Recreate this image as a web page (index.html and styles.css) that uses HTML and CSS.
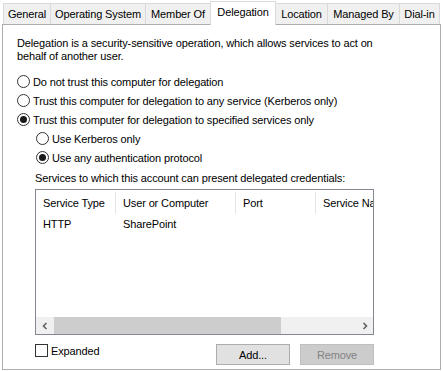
FILE: index.html
```html
<!DOCTYPE html>
<html>
<head>
<meta charset="utf-8">
<link rel="stylesheet" href="styles.css">
</head>
<body>
<div class="dialog">
  <div class="tabs">
    <div class="tab t1">General</div>
    <div class="tab t2">Operating System</div>
    <div class="tab t3">Member Of</div>
    <div class="tab t4 active">Delegation</div>
    <div class="tab t5">Location</div>
    <div class="tab t6">Managed By</div>
    <div class="tab t7">Dial-in</div>
  </div>
  <div class="panel">
    <p class="intro">Delegation is a security-sensitive operation, which allows services to act on behalf of another user.</p>
    <div class="options">
      <div class="radio-row"><span class="radio"></span><span>Do not trust this computer for delegation</span></div>
      <div class="radio-row"><span class="radio"></span><span>Trust this computer for delegation to any service (Kerberos only)</span></div>
      <div class="radio-row"><span class="radio checked"></span><span>Trust this computer for delegation to specified services only</span></div>
      <div class="sub">
        <div class="radio-row"><span class="radio"></span><span>Use Kerberos only</span></div>
        <div class="radio-row"><span class="radio checked"></span><span>Use any authentication protocol</span></div>
      </div>
    </div>
    <div class="services">
      <div class="label">Services to which this account can present delegated credentials:</div>
      <div class="listview">
        <div class="list-body">
          <div class="header">
            <div class="col c1">Service Type</div>
            <div class="col c2">User or Computer</div>
            <div class="col c3">Port</div>
            <div class="col c4">Service Na</div>
          </div>
          <div class="row">
            <div class="col c1">HTTP</div>
            <div class="col c2">SharePoint</div>
            <div class="col c3"></div>
            <div class="col c4"></div>
          </div>
        </div>
        <div class="hscroll">
          <div class="arrow"><svg width="8" height="8" viewBox="0 0 8 8"><path d="M5.5 1 L2.5 4 L5.5 7" fill="none" stroke="#606060" stroke-width="1.6"/></svg></div>
          <div class="track"><div class="thumb"></div></div>
          <div class="arrow"><svg width="8" height="8" viewBox="0 0 8 8"><path d="M2.5 1 L5.5 4 L2.5 7" fill="none" stroke="#606060" stroke-width="1.6"/></svg></div>
        </div>
      </div>
      <div class="footer">
        <label class="check"><span class="box"></span><span>Expanded</span></label>
        <div class="buttons">
          <button class="btn">Add...</button>
          <button class="btn disabled">Remove</button>
        </div>
      </div>
    </div>
  </div>
</div>
</body>
</html>
```

FILE: styles.css
```css
html, body {
  margin: 0;
  padding: 0;
  background: #ffffff;
}
body {
  font-family: "Liberation Sans", Arial, sans-serif;
  font-size: 11px;
  letter-spacing: -0.13px;
  color: #000;
  width: 443px;
  height: 371px;
  overflow: hidden;
}
.dialog {
  padding: 3px 0 0 2px;
}
.tabs {
  display: flex;
  height: 21px;
  padding-left: 1px;
  position: relative;
  z-index: 2;
}
.tab {
  box-sizing: border-box;
  height: 21px;
  border: 1px solid #d9d9d9;
  border-right: none;
  border-bottom: none;
  background: #f0f0f0;
  display: flex;
  align-items: center;
  justify-content: center;
  white-space: nowrap;
}
.tab.t1 { width: 47px; }
.tab.t2 { width: 95px; }
.tab.t3 { width: 65px; }
.tab.t4 { width: 66px; }
.tab.t5 { width: 51px; }
.tab.t6 { width: 72px; }
.tab.t7 { width: 41px; border-right: 1px solid #d9d9d9; }
.tab.active {
  background: #fff;
  height: 24px;
  margin-top: -2px;
  border: 1px solid #d9d9d9;
  border-bottom: none;
  padding-bottom: 3px;
}
.tab.active + .tab { border-left: none; }
.panel {
  box-sizing: border-box;
  width: 439px;
  height: 346px;
  border: 1px solid #adadad;
  background: #fff;
  padding: 12px 0 0 14px;
}
.intro {
  margin: 0;
  line-height: 13px;
  width: 362px;
}
.options {
  margin-top: 9px;
}
.radio-row {
  display: flex;
  align-items: center;
  height: 19px;
  gap: 3px;
  white-space: nowrap;
}
.radio {
  box-sizing: border-box;
  width: 13px;
  height: 13px;
  border: 1px solid #333;
  border-radius: 50%;
  background: #fff;
  display: flex;
  align-items: center;
  justify-content: center;
  flex: none;
}
.radio.checked::after {
  content: "";
  width: 7px;
  height: 7px;
  border-radius: 50%;
  background: #1a1a1a;
}
.sub {
  padding-left: 19px;
}
.services {
  padding-left: 18px;
}
.label {
  margin-top: 5px;
  line-height: 13px;
}
.listview {
  box-sizing: border-box;
  margin-top: 4px;
  width: 339px;
  height: 146px;
  border: 1px solid #828790;
  display: flex;
  flex-direction: column;
}
.list-body {
  flex: 1;
  overflow: hidden;
}
.header, .row {
  display: flex;
  white-space: nowrap;
}
.header {
  height: 24px;
  align-items: center;
  margin-top: 1px;
}
.header .col {
  height: 22px;
  display: flex;
  align-items: center;
  border-right: 1px solid #e5e5e5;
  box-sizing: border-box;
}
.header .col.c4 { border-right: none; }
.row {
  height: 18px;
  align-items: center;
}
.col {
  padding-left: 7px;
  box-sizing: border-box;
  flex: none;
  overflow: hidden;
}
.c1 { width: 80px; }
.c2 { width: 120px; }
.c3 { width: 80px; }
.c4 { width: 57px; }
.hscroll {
  height: 17px;
  display: flex;
  background: #f0f0f0;
  flex: none;
}
.arrow {
  width: 17px;
  display: flex;
  align-items: center;
  justify-content: center;
  flex: none;
}
.track {
  flex: 1;
  display: flex;
  align-items: stretch;
  padding: 0 0 0 1px;
}
.thumb {
  width: 227px;
  background: #cdcdcd;
}
.footer {
  display: flex;
  align-items: flex-start;
  margin-top: 9px;
}
.check {
  display: flex;
  align-items: center;
  gap: 3px;
  height: 13px;
  margin-top: 0px;
  width: 181px;
}
.box {
  box-sizing: border-box;
  width: 13px;
  height: 13px;
  border: 1px solid #333;
  background: #fff;
}
.buttons {
  display: flex;
  gap: 10px;
}
.btn {
  box-sizing: border-box;
  width: 74px;
  height: 21px;
  border: 1px solid #adadad;
  background: #e1e1e1;
  font-family: "Liberation Sans", Arial, sans-serif;
  font-size: 11px;
  letter-spacing: -0.13px;
  color: #000;
  padding: 0;
}
.btn.disabled {
  background: #cccccc;
  border-color: #bfbfbf;
  color: #838383;
}
```
